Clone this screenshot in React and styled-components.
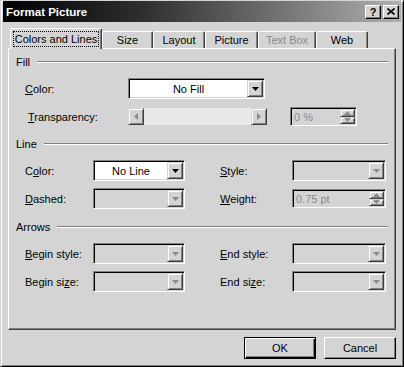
import React from 'react';
import styled, { createGlobalStyle } from 'styled-components';

const FACE = '#d4d4d4';

const GlobalStyle = createGlobalStyle`
  html, body { margin: 0; padding: 0; background: ${FACE}; }
`;

const Window = styled.div`
  width: 404px;
  height: 367px;
  box-sizing: border-box;
  background: ${FACE};
  border: 1px solid;
  border-color: ${FACE} #000 #000 ${FACE};
  box-shadow: inset 1px 1px #fff, inset -1px -1px #808080;
  padding: 0 2px 2px 2px;
  display: flex;
  flex-direction: column;
  font-family: 'Liberation Sans', Arial, sans-serif;
  font-size: 11px;
  color: #000;
  white-space: nowrap;
`;

const TitleBar = styled.div`
  height: 21px;
  display: flex;
  align-items: center;
  padding: 0 2px 0 3px;
  background: linear-gradient(to right, #000 0%, #2e2e2e 35%, #b0b0b0 100%);
  color: #fff;
  font-weight: bold;
  font-size: 11.5px;
`;

const Title = styled.span`
  flex: 1;
`;

const CaptionButton = styled.div`
  width: 16px;
  height: 14px;
  box-sizing: border-box;
  margin-left: 2px;
  background: ${FACE};
  border: 1px solid;
  border-color: #fff #000 #000 #fff;
  box-shadow: inset -1px -1px #808080;
  display: flex;
  align-items: center;
  justify-content: center;
  color: #000;
  font-size: 11px;
  font-weight: bold;
`;

const Body = styled.div`
  flex: 1;
  padding: 6px 5px 0 5px;
  display: flex;
  flex-direction: column;
`;

const TabStrip = styled.div`
  height: 20px;
  display: flex;
  align-items: flex-end;
  padding-left: 2px;
  position: relative;
  z-index: 1;
`;

const Tab = styled.div`
  width: ${(p) => p.$w}px;
  height: ${(p) => (p.$active ? 21 : 17)}px;
  margin-bottom: ${(p) => (p.$active ? -1 : 0)}px;
  box-sizing: border-box;
  background: ${FACE};
  border-top: 1px solid #fff;
  border-left: 1px solid #fff;
  border-right: 1px solid #404040;
  border-radius: 2px 2px 0 0;
  box-shadow: inset -1px 0 #808080;
  display: flex;
  align-items: center;
  justify-content: center;
  color: ${(p) => (p.$disabled ? '#8a8a8a' : '#000')};
`;

const FocusText = styled.span`
  border: 1px dotted #000;
  padding: 1px 1px;
`;

const Panel = styled.div`
  height: 282px;
  box-sizing: border-box;
  border: 1px solid;
  border-color: #fff #404040 #404040 #fff;
  box-shadow: inset -1px -1px #808080;
  padding: 6px 7px 0 7px;
`;

const Group = styled.div`
  margin-top: ${(p) => p.$top || 0}px;
`;

const GroupHeader = styled.div`
  height: 14px;
  display: flex;
  align-items: center;
  margin-bottom: 9px;

  &::after {
    content: '';
    flex: 1;
    margin-left: 7px;
    border-top: 1px solid #808080;
    border-bottom: 1px solid #fff;
  }
`;

const Rows = styled.div`
  padding-left: 9px;
  display: grid;
  grid-template-columns: ${(p) => p.$cols};
  grid-auto-rows: 21px;
  row-gap: 7px;
  align-items: center;
`;

const Label = styled.div`
  padding-left: ${(p) => p.$indent || 0}px;
`;

const Key = styled.u`
  text-decoration: underline;
`;

const Field = styled.div`
  width: ${(p) => p.$w}px;
  height: ${(p) => p.$h || 21}px;
  box-sizing: border-box;
  border: 1px solid;
  border-color: #808080 #fff #fff #808080;
  box-shadow: inset 1px 1px #000, inset -1px -1px ${FACE};
  background: ${(p) => (p.$disabled ? FACE : '#fff')};
  padding: 1px;
  display: flex;
  align-items: stretch;
  margin-left: ${(p) => p.$ml || 0}px;
`;

const Value = styled.div`
  flex: 1;
  display: flex;
  align-items: center;
  justify-content: ${(p) => (p.$left ? 'flex-start' : 'center')};
  padding-left: ${(p) => (p.$left ? 2 : 0)}px;
  color: ${(p) => (p.$disabled ? '#8a8a8a' : '#000')};
`;

const RaisedButton = styled.div`
  width: ${(p) => p.$w || 16}px;
  flex: ${(p) => (p.$grow ? 1 : 'none')};
  box-sizing: border-box;
  background: ${FACE};
  border: 1px solid;
  border-color: ${FACE} #404040 #404040 ${FACE};
  box-shadow: inset 1px 1px #fff, inset -1px -1px #808080;
  display: flex;
  align-items: center;
  justify-content: center;
`;

const SpinColumn = styled.div`
  width: 15px;
  display: flex;
  flex-direction: column;
`;

const SliderRow = styled.div`
  display: flex;
  align-items: center;
`;

const ScrollBar = styled.div`
  width: 139px;
  height: 17px;
  display: flex;
`;

const Track = styled.div`
  flex: 1;
  background: #e9e9e9;
`;

const Footer = styled.div`
  margin-top: 7px;
  display: flex;
  justify-content: flex-end;
  gap: 8px;
`;

const PushButton = styled.div`
  width: 72px;
  height: 22px;
  box-sizing: border-box;
  background: ${FACE};
  border: 1px solid;
  border-color: ${(p) => (p.$default ? '#000' : '#fff #000 #000 #fff')};
  box-shadow: ${(p) =>
    p.$default
      ? 'inset 1px 1px #fff, inset -1px -1px #000, inset -2px -2px #808080'
      : 'inset -1px -1px #808080'};
  display: flex;
  align-items: center;
  justify-content: center;
`;

const Arrow = ({ dir = 'down', color = '#000' }) => {
  const pts = {
    down: '0,0 7,0 3.5,4',
    up: '0,4 7,4 3.5,0',
    left: '4,0 4,7 0,3.5',
    right: '0,0 0,7 4,3.5',
  }[dir];
  const vertical = dir === 'up' || dir === 'down';
  return (
    <svg width={vertical ? 7 : 4} height={vertical ? 4 : 7} viewBox={vertical ? '0 0 7 4' : '0 0 4 7'}>
      <polygon points={pts} fill={color} />
    </svg>
  );
};

const Dropdown = ({ w, value, disabled }) => (
  <Field $w={w} $disabled={disabled}>
    <Value>{value}</Value>
    <RaisedButton>
      <Arrow color={disabled ? '#8a8a8a' : '#000'} />
    </RaisedButton>
  </Field>
);

const Spinner = ({ w, value, ml }) => (
  <Field $w={w} $h={19} $ml={ml} $disabled>
    <Value $left $disabled>
      {value}
    </Value>
    <SpinColumn>
      <RaisedButton $w={15} $grow>
        <Arrow dir="up" color="#8a8a8a" />
      </RaisedButton>
      <RaisedButton $w={15} $grow>
        <Arrow dir="down" color="#8a8a8a" />
      </RaisedButton>
    </SpinColumn>
  </Field>
);

const tabs = [
  { name: 'Colors and Lines', w: 92, active: true },
  { name: 'Size', w: 51 },
  { name: 'Layout', w: 52 },
  { name: 'Picture', w: 53 },
  { name: 'Text Box', w: 58, disabled: true },
  { name: 'Web', w: 52 },
];

export default function App() {
  return (
    <>
      <GlobalStyle />
      <Window>
        <TitleBar>
          <Title>Format Picture</Title>
          <CaptionButton>?</CaptionButton>
          <CaptionButton>
            <svg width="8" height="7" viewBox="0 0 8 7">
              <path d="M0.5 0.5 L7.5 6.5 M7.5 0.5 L0.5 6.5" stroke="#000" strokeWidth="1.6" />
            </svg>
          </CaptionButton>
        </TitleBar>
        <Body>
          <TabStrip>
            {tabs.map((t) => (
              <Tab key={t.name} $w={t.w} $active={t.active} $disabled={t.disabled}>
                {t.active ? <FocusText>{t.name}</FocusText> : t.name}
              </Tab>
            ))}
          </TabStrip>
          <Panel>
            <Group>
              <GroupHeader>Fill</GroupHeader>
              <Rows $cols="103px auto">
                <Label>
                  <Key>C</Key>olor:
                </Label>
                <Dropdown w={137} value="No Fill" />
                <Label $indent={3}>
                  <Key>T</Key>ransparency:
                </Label>
                <SliderRow>
                  <ScrollBar>
                    <RaisedButton>
                      <Arrow dir="left" color="#8a8a8a" />
                    </RaisedButton>
                    <Track />
                    <RaisedButton>
                      <Arrow dir="right" color="#8a8a8a" />
                    </RaisedButton>
                  </ScrollBar>
                  <Spinner w={67} value="0 %" ml={23} />
                </SliderRow>
              </Rows>
            </Group>

            <Group $top={10}>
              <GroupHeader>Line</GroupHeader>
              <Rows $cols="68px 127px 72px 94px">
                <Label>
                  C<Key>o</Key>lor:
                </Label>
                <Dropdown w={92} value="No Line" />
                <Label>
                  <Key>S</Key>tyle:
                </Label>
                <Dropdown w={94} disabled />
                <Label>
                  <Key>D</Key>ashed:
                </Label>
                <Dropdown w={92} disabled />
                <Label>
                  <Key>W</Key>eight:
                </Label>
                <Spinner w={94} value="0.75 pt" />
              </Rows>
            </Group>

            <Group $top={11}>
              <GroupHeader>Arrows</GroupHeader>
              <Rows $cols="68px 127px 72px 94px">
                <Label>
                  <Key>B</Key>egin style:
                </Label>
                <Dropdown w={92} disabled />
                <Label>
                  <Key>E</Key>nd style:
                </Label>
                <Dropdown w={94} disabled />
                <Label>
                  Begin si<Key>z</Key>e:
                </Label>
                <Dropdown w={92} disabled />
                <Label>
                  End si<Key>z</Key>e:
                </Label>
                <Dropdown w={94} disabled />
              </Rows>
            </Group>
          </Panel>
          <Footer>
            <PushButton $default>OK</PushButton>
            <PushButton>Cancel</PushButton>
          </Footer>
        </Body>
      </Window>
    </>
  );
}
